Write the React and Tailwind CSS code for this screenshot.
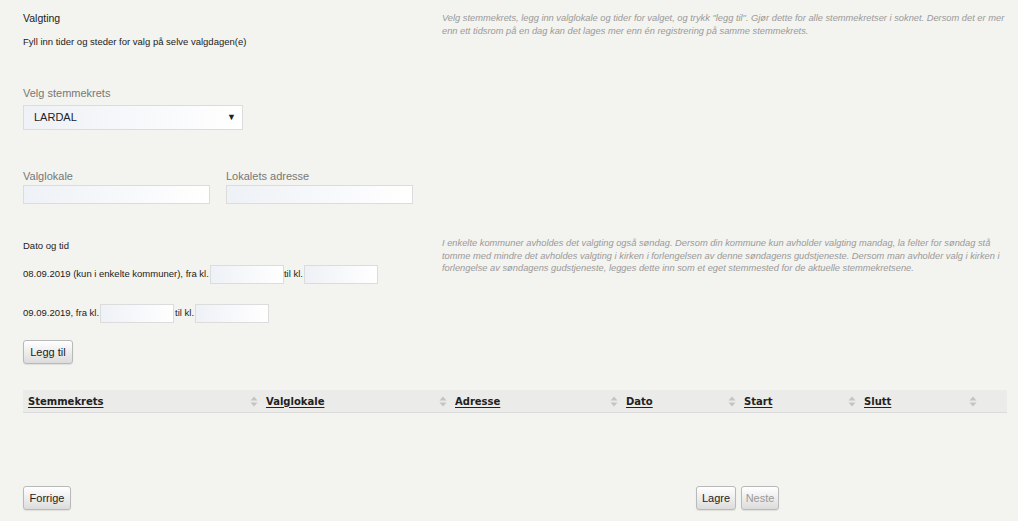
import React from 'react';

const inputCls =
  'h-[19px] border border-[#dcdcdc] bg-gradient-to-r from-[#eef1f6] to-white outline-none';

const btnCls =
  'h-6 whitespace-nowrap rounded-[3px] border border-[#b9b9b9] bg-gradient-to-b from-white to-[#dcdcdc] text-[11px] text-[#222] shadow-[0_1px_1px_rgba(0,0,0,0.08)]';

const SortIcon = () => (
  <svg width="8" height="11" viewBox="0 0 8 11" className="shrink-0">
    <path d="M4 0.5 L7.5 4.5 H0.5 Z" fill="#c4c4c4" />
    <path d="M4 10.5 L7.5 6.5 H0.5 Z" fill="#c4c4c4" />
  </svg>
);

const columns = [
  { label: 'Stemmekrets', w: 'w-[238px]' },
  { label: 'Valglokale', w: 'w-[189px]' },
  { label: 'Adresse', w: 'w-[171px]' },
  { label: 'Dato', w: 'w-[118px]' },
  { label: 'Start', w: 'w-[120px]' },
  { label: 'Slutt', w: 'w-[121px]' },
];

export default function App() {
  return (
    <div className="min-h-[521px] w-[1018px] bg-[#f3f3ef] font-['Liberation_Sans',Arial,sans-serif] text-[#222]">
      {/* Top section */}
      <div className="flex">
        <div className="w-[442px] pl-[23px] pt-[12px]">
          <div className="text-[10.5px] leading-[13px]">Valgting</div>
          <div className="mt-[10px] text-[9.5px] leading-[13px]">Fyll inn tider og steder for valg på selve valgdagen(e)</div>

          <div className="mt-[38px] text-[11px] leading-[14px] text-[#777]">Velg stemmekrets</div>
          <div className="mt-[5px] flex h-[25px] w-[220px] items-center justify-between border border-[#dcdcdc] bg-gradient-to-r from-[#eef1f6] to-white pl-[10px] pr-[6px]">
            <span className="text-[11px]">LARDAL</span>
            <span className="text-[9px] leading-none">▼</span>
          </div>

          <div className="mt-[39px] flex gap-[16px]">
            <div>
              <div className="text-[11px] leading-[14px] text-[#777]">Valglokale</div>
              <div className={`${inputCls} mt-[2px] w-[187px]`} />
            </div>
            <div>
              <div className="text-[11px] leading-[14px] text-[#777]">Lokalets adresse</div>
              <div className={`${inputCls} mt-[2px] w-[187px]`} />
            </div>
          </div>
        </div>
        <div className="w-[568px] pt-[12px] text-[9.3px] italic leading-[12.5px] text-[#9a9a9a]">
          Velg stemmekrets, legg inn valglokale og tider for valget, og trykk "legg til". Gjør dette for alle stemmekretser i soknet. Dersom det er mer enn ett tidsrom på en dag kan det lages mer enn én registrering på samme stemmekrets.
        </div>
      </div>

      {/* Date section */}
      <div className="mt-[35px] flex">
        <div className="w-[442px] pl-[23px]">
          <div className="text-[9.5px] leading-[13px]">Dato og tid</div>
          <div className="mt-[13px] flex items-center text-[9.5px]">
            <span>08.09.2019 (kun i enkelte kommuner), fra kl.</span>
            <div className={`${inputCls} ml-[1px] w-[74px]`} />
            <span>til kl.</span>
            <div className={`${inputCls} ml-[1px] w-[74px]`} />
          </div>
          <div className="mt-[20px] flex items-center text-[9.5px]">
            <span>09.09.2019, fra kl.</span>
            <div className={`${inputCls} ml-[1px] w-[74px]`} />
            <span className="ml-[1px]">til kl.</span>
            <div className={`${inputCls} ml-[1px] w-[74px]`} />
          </div>
          <button className={`${btnCls} mt-[17px] w-[50px]`}>Legg til</button>
        </div>
        <div className="-mt-[2px] w-[566px] text-[9.3px] italic leading-[12.5px] text-[#9a9a9a]">
          I enkelte kommuner avholdes det valgting også søndag. Dersom din kommune kun avholder valgting mandag, la felter for søndag stå tomme med mindre det avholdes valgting i kirken i forlengelsen av denne søndagens gudstjeneste. Dersom man avholder valg i kirken i forlengelse av søndagens gudstjeneste, legges dette inn som et eget stemmested for de aktuelle stemmekretsene.
        </div>
      </div>

      {/* Table */}
      <div className="mx-[23px] mt-[26px] w-[984px]">
        <div className="flex h-[23px] items-center border-b border-[#dadada] bg-[#ebebe9] pl-[5px] font-['DejaVu_Sans',Verdana,sans-serif] text-[10px] font-bold text-[#222]">
          {columns.map((c) => (
            <div key={c.label} className={`${c.w} flex items-center justify-between pr-[8px]`}>
              <span className="underline underline-offset-2">{c.label}</span>
              <SortIcon />
            </div>
          ))}
        </div>
      </div>

      {/* Bottom buttons */}
      <div className="mt-[73px] flex items-center pl-[23px]">
        <button className={`${btnCls} w-[48px]`}>Forrige</button>
        <div className="ml-[625px] flex gap-[5px]">
          <button className={`${btnCls} w-[40px]`}>Lagre</button>
          <button className={`${btnCls} w-[38px] text-[#999]`}>Neste</button>
        </div>
      </div>
    </div>
  );
}
